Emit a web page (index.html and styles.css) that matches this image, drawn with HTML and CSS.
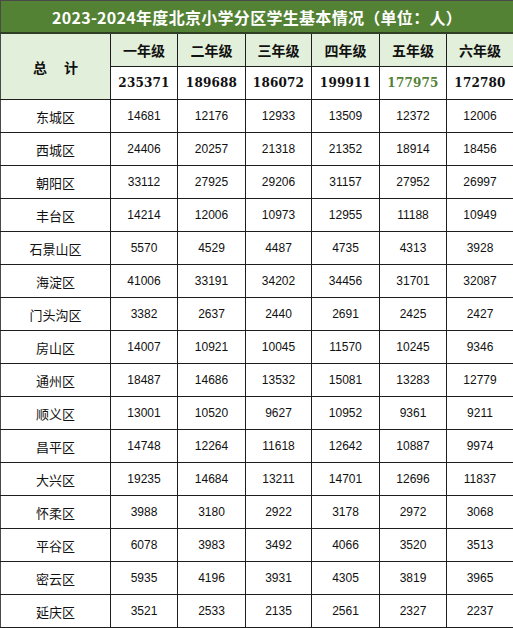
FILE: index.html
```html
<!DOCTYPE html>
<html lang="zh-CN">
<head>
<meta charset="utf-8">
<title>2023-2024年度北京小学分区学生基本情况</title>
<link rel="stylesheet" href="styles.css">
</head>
<body>
<table class="stats">
  <colgroup>
    <col class="c-name"><col class="c67"><col class="c68"><col class="c66"><col class="c68"><col class="c67"><col class="c67">
  </colgroup>
  <thead>
    <tr class="title-row"><th colspan="7" class="title">2023-2024年度北京小学分区学生基本情况（单位：人）</th></tr>
    <tr class="head-row">
      <th rowspan="2" class="total-label">总<span class="sp"></span>计</th>
      <th>一年级</th><th>二年级</th><th>三年级</th><th>四年级</th><th>五年级</th><th>六年级</th>
    </tr>
    <tr class="sum-row">
      <td>235371</td><td>189688</td><td>186072</td><td>199911</td><td class="hl">177975</td><td>172780</td>
    </tr>
  </thead>
  <tbody>
    <tr><th>东城区</th><td>14681</td><td>12176</td><td>12933</td><td>13509</td><td>12372</td><td>12006</td></tr>
    <tr><th>西城区</th><td>24406</td><td>20257</td><td>21318</td><td>21352</td><td>18914</td><td>18456</td></tr>
    <tr><th>朝阳区</th><td>33112</td><td>27925</td><td>29206</td><td>31157</td><td>27952</td><td>26997</td></tr>
    <tr><th>丰台区</th><td>14214</td><td>12006</td><td>10973</td><td>12955</td><td>11188</td><td>10949</td></tr>
    <tr><th>石景山区</th><td>5570</td><td>4529</td><td>4487</td><td>4735</td><td>4313</td><td>3928</td></tr>
    <tr><th>海淀区</th><td>41006</td><td>33191</td><td>34202</td><td>34456</td><td>31701</td><td>32087</td></tr>
    <tr><th>门头沟区</th><td>3382</td><td>2637</td><td>2440</td><td>2691</td><td>2425</td><td>2427</td></tr>
    <tr><th>房山区</th><td>14007</td><td>10921</td><td>10045</td><td>11570</td><td>10245</td><td>9346</td></tr>
    <tr><th>通州区</th><td>18487</td><td>14686</td><td>13532</td><td>15081</td><td>13283</td><td>12779</td></tr>
    <tr><th>顺义区</th><td>13001</td><td>10520</td><td>9627</td><td>10952</td><td>9361</td><td>9211</td></tr>
    <tr><th>昌平区</th><td>14748</td><td>12264</td><td>11618</td><td>12642</td><td>10887</td><td>9974</td></tr>
    <tr><th>大兴区</th><td>19235</td><td>14684</td><td>13211</td><td>14701</td><td>12696</td><td>11837</td></tr>
    <tr><th>怀柔区</th><td>3988</td><td>3180</td><td>2922</td><td>3178</td><td>2972</td><td>3068</td></tr>
    <tr><th>平谷区</th><td>6078</td><td>3983</td><td>3492</td><td>4066</td><td>3520</td><td>3513</td></tr>
    <tr><th>密云区</th><td>5935</td><td>4196</td><td>3931</td><td>4305</td><td>3819</td><td>3965</td></tr>
    <tr><th>延庆区</th><td>3521</td><td>2533</td><td>2135</td><td>2561</td><td>2327</td><td>2237</td></tr>
  </tbody>
</table>
</body>
</html>
```
FILE: styles.css
```css
html, body {
  margin: 0;
  padding: 0;
  background: #ffffff;
}
.stats {
  width: 513px;
  table-layout: fixed;
  border-collapse: collapse;
  font-family: "Liberation Sans", "Noto Sans CJK SC", sans-serif;
  color: #111;
}
.c-name { width: 110px; }
.c67 { width: 67px; }
.c68 { width: 68px; }
.c66 { width: 66px; }
.stats th,
.stats td {
  border: 1px solid #1e1e1e;
  height: 32px;
  padding: 0;
  text-align: center;
  vertical-align: middle;
}
.stats .title {
  background: #548235;
  color: #ffffff;
  font-family: "Noto Sans CJK SC", sans-serif;
  font-weight: 700;
  font-size: 16px;
  letter-spacing: 0.3px;
  border: 1px solid #4a4a4a;
  border-bottom: 2px solid #2f3f25;
  height: 31px;
}
.head-row th {
  background: #e2efda;
  font-family: "Noto Sans CJK SC", sans-serif;
  font-weight: 700;
  font-size: 14px;
  color: #111;
}
.total-label .sp {
  display: inline-block;
  width: 17px;
}
.sum-row td {
  font-family: "DejaVu Serif", "Liberation Serif", serif;
  font-weight: 700;
  font-size: 12px;
  letter-spacing: 0.2px;
  color: #111;
}
.sum-row .hl {
  color: #548235;
}
tbody th {
  font-family: "Noto Sans CJK SC", sans-serif;
  font-weight: 400;
  font-size: 13px;
  color: #111;
}
tbody td {
  font-family: "Liberation Sans", sans-serif;
  font-size: 12px;
  color: #111;
}
tr > :first-child { border-left-color: #4a4a4a; }
```
